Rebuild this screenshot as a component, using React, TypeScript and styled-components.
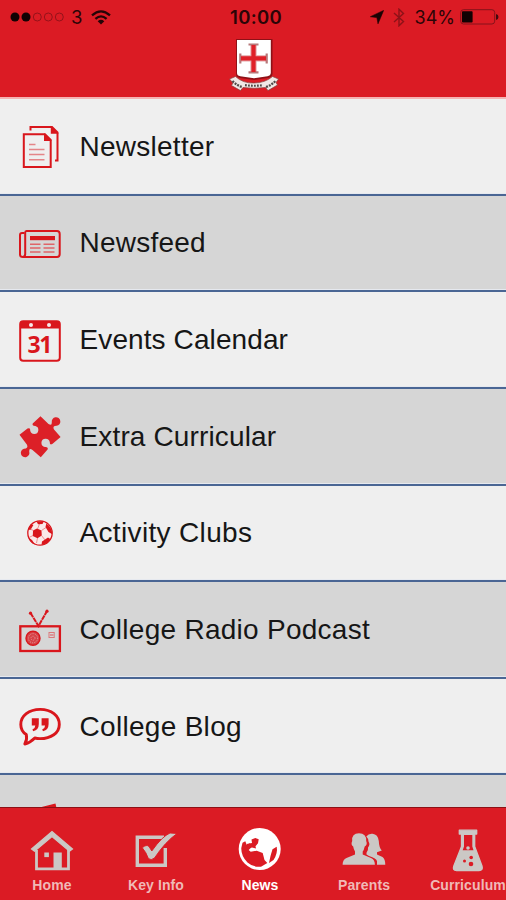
import React from "react";
import styled, { createGlobalStyle } from "styled-components";

const RED = "#db1b24";
const ICON_RED = "#d9161c";
const MUTED = "#cbc8c5";

const GlobalStyle = createGlobalStyle`
  * { box-sizing: border-box; }
  body { margin: 0; background: ${RED}; overflow: hidden; font-family: "Liberation Sans", Arial, sans-serif; }
  svg { display: block; flex: none; }
`;

const Screen = styled.div`
  width: 506px;
  height: 900px;
  display: flex;
  flex-direction: column;
  overflow: hidden;
`;

const Header = styled.header`
  height: 99px;
  flex: none;
  background: ${RED};
  border-bottom: 2px solid #f5b3b3;
`;

const StatusBar = styled.div`
  height: 34px;
  display: grid;
  grid-template-columns: 1fr 60px 1fr;
  align-items: center;
  padding: 0 7px 0 10px;
  color: #2b0507;
  font: 19px Inter, "Liberation Sans", sans-serif;
`;

const StatusGroup = styled.div<{ $end?: boolean }>`
  display: flex;
  align-items: center;
  justify-content: ${(p) => (p.$end ? "flex-end" : "flex-start")};
`;

const Carrier = styled.span`
  margin: 0 9px 0 6px;
  font-size: 18.5px;
`;

const Clock = styled.span`
  padding-left: 3px;
  text-align: center;
  font-weight: 600;
  font-size: 18.5px;
  letter-spacing: 0.3px;
  white-space: nowrap;
`;

const BluetoothSlot = styled.span`
  margin-left: 9px;
`;

const Percent = styled.span`
  margin: 0 5px 0 10px;
  font-size: 18px;
`;

const CrestSlot = styled.div`
  display: flex;
  justify-content: center;
  padding: 3px 0 0 2px;
`;

const List = styled.ul`
  flex: 1;
  min-height: 0;
  margin: 0;
  padding: 0;
  list-style: none;
  overflow: hidden;
`;

const Row = styled.li<{ $shaded: boolean }>`
  height: 96.65px;
  display: flex;
  align-items: center;
  padding-left: 18px;
  background: ${(p) => (p.$shaded ? "#d6d6d6" : "#efefef")};
  border-bottom: 2px solid #4a6694;
  box-shadow: inset 0 -1px 0 #e6e9ef;
`;

const RowCanvas = styled.svg`
  margin-top: 2px;
`;

const RowLabel = styled.span<{ $spacing: number }>`
  margin-left: 17.5px;
  padding-top: 1px;
  color: #161616;
  font-size: 28px;
  line-height: 32px;
  letter-spacing: ${(p) => p.$spacing}px;
  white-space: nowrap;
`;

const TabBar = styled.nav`
  height: 93px;
  flex: none;
  display: grid;
  grid-template-columns: repeat(5, 104px);
  background: ${RED};
  border-top: 1px solid #8d1015;
`;

const Tab = styled.div<{ $active?: boolean }>`
  display: flex;
  flex-direction: column;
  align-items: center;
  padding-top: 20px;
  color: ${(p) => (p.$active ? "#ffffff" : MUTED)};
`;

const TabLabel = styled.span<{ $active?: boolean }>`
  margin-top: 5px;
  color: ${(p) => (p.$active ? "#ffffff" : "#f0b9b7")};
  font-size: 14px;
  line-height: 16px;
  font-weight: 700;
  letter-spacing: 0.1px;
  white-space: nowrap;
`;

const SignalDots = () => (
  <svg width="55" height="12" viewBox="0 0 55 12">
    <circle cx="5" cy="6" r="4.5" fill="#120203" />
    <circle cx="16" cy="6" r="4.5" fill="#120203" />
    {[27.3, 38.3, 49.3].map((x) => (
      <circle key={x} cx={x} cy="6" r="4" fill="none" stroke="#94131a" strokeWidth="1" />
    ))}
  </svg>
);

const Wifi = () => (
  <svg width="20" height="15" viewBox="0 0 20 15" fill="none" stroke="#250406" strokeWidth="2.3">
    <path d="M1 5.3Q10-2.6 19 5.3M4.4 8.9Q10 3.8 15.6 8.9" />
    <path d="M10 14.5L6.7 11.3Q10 8.4 13.3 11.3Z" fill="#250406" stroke="none" />
  </svg>
);

const LocationArrow = () => (
  <svg width="14" height="14" viewBox="0 0 14 14">
    <path d="M13.6.4L8 13.8L6.9 7.6L.4 6.7Z" fill="#1b0304" stroke="#1b0304" strokeWidth=".6" />
  </svg>
);

const Bluetooth = () => (
  <svg width="12" height="19" viewBox="0 0 12 19" fill="none" stroke="#8d1218" strokeWidth="1.4">
    <path d="M1 5L10.5 13.5L6 17.8V1.2L10.5 5.5L1 14" />
  </svg>
);

const Battery = () => (
  <svg width="39" height="16" viewBox="0 0 39 16">
    <rect x=".7" y=".7" width="34" height="14.3" rx="2.8" fill="none" stroke="#86131a" />
    <rect x="2" y="2.3" width="10.6" height="11.2" rx=".8" fill="#110203" />
    <path d="M36 5Q38.5 5.5 38.5 8T36 11Z" fill="#430a0d" />
  </svg>
);

const Crest = () => (
  <svg width="52" height="56" viewBox="0 0 52 56">
    <path d="M8 2H44.5V37Q44 40 40 41L26 43L12 41Q8 40 8 37Z" fill="#8f1117" />
    <path d="M9 3H42.8V36Q42.5 38.8 39.5 39.2L26 41.3L12.3 39.2Q9 38.8 9 36Z" fill="#fff" />
    <path d="M25.5 8V35M13 21.4H38" stroke="#e3a6a8" strokeWidth="6.2" />
    <path d="M20.5 7.5H30.5M20.5 35.3H30.5M12.3 16.5V26.5M38.7 16.5V26.5" stroke="#b67779" strokeWidth="2.2" />
    <path d="M25.5 8V35M13 21.4H38" stroke="#df2028" strokeWidth="4.2" />
    <path d="M1.5 42L7.5 39.5Q15 46.5 26 46Q37 46 44.5 39.5L50.5 42L48 45.5L49.5 48L40 53.6L37.5 50.5Q26 52 15 50.5L12.5 53.6L3.5 48.5L5 46Z" fill="#f1e8e6" stroke="#85403f" strokeWidth=".7" />
    <g fill="none" stroke="#504b49" strokeWidth="2.2">
      <path d="M4.5 44Q9 48.5 14 50" strokeDasharray="2 1" />
      <path d="M17 48.2Q26 49.3 35 48.2" strokeDasharray="1.8 1.2" />
      <path d="M38 50Q44 48 47.5 43.8" strokeDasharray="2 1" />
    </g>
  </svg>
);

/* Row icons share one 44 unit canvas. */
const RowIcon = ({ children }: { children: React.ReactNode }) => (
  <RowCanvas width="44" height="44" viewBox="0 0 44 44" fill="none" stroke={ICON_RED} strokeWidth="2">
    {children}
  </RowCanvas>
);

const NewsletterIcon = () => (
  <RowIcon>
    <path d="M12.5 5.5V2H34L39.5 7.5V35.5H37" />
    <path d="M33.5 2.5V8H39Z" fill={ICON_RED} strokeWidth="1.4" />
    <path d="M5.8 9.3H27L32.7 15V42H5.8Z" />
    <path d="M26.7 9.8V15.3H32.2Z" fill={ICON_RED} strokeWidth="1.4" />
    <path d="M11 19.5H17.5M11 24.5H26.5M11 29.5H26.5M11 34.7H26.5" stroke="#e48588" strokeWidth="1.5" />
  </RowIcon>
);

const NewsfeedIcon = () => (
  <RowIcon>
    <path d="M8.5 9H39Q41.7 9 41.7 12V32Q41.7 35 39 35H5Q7.2 34.5 7.2 32V10.5Q7.2 9 8.5 9Z" />
    <path d="M6.5 11H4Q2 11 2 13V32.5Q2 35 5 35" />
    <rect x="12" y="14" width="25" height="4.2" fill={ICON_RED} stroke="none" />
    <path d="M12 22.3H22.5M25.5 22.3H36.5M12 26H22.5M25.5 26H36.5M12 30H22.5M25.5 30H36.5" stroke="#df6468" strokeWidth="1.5" />
  </RowIcon>
);

const CalendarDay = styled.text`
  font-family: "Noto Sans", "Open Sans", sans-serif;
  font-size: 23px;
  font-weight: 700;
  letter-spacing: -1.4px;
`;

const CalendarIcon = () => (
  <RowIcon>
    <rect x="2.2" y="2.2" width="39.6" height="39.6" rx="3" />
    <path d="M2 9.5V4.5Q2 2 5 2H39Q42 2 42 4.5V9.5Z" fill={ICON_RED} stroke="none" />
    <circle cx="13" cy="6" r="2" fill="#f7e9e9" stroke="none" />
    <circle cx="31" cy="6" r="2" fill="#f7e9e9" stroke="none" />
    <CalendarDay x="21.3" y="33.9" textAnchor="middle" fill={ICON_RED} stroke="none">31</CalendarDay>
  </RowIcon>
);

const PuzzleIcon = () => (
  <RowIcon>
    <path
      d="M1.5 19.8L9.5 13.6Q12.6 12.4 12.2 15.5A4.1 4.1 0 1 0 17.4 10.9Q13.8 11 14.7 8.6L22.5 1.2L30.5 9Q34 11.3 33.8 7.2A4.3 4.3 0 1 1 38.6 10.8Q34 11 36 14.5L42.6 22L34.3 29Q31.5 30.3 31.8 27.3A4.2 4.2 0 1 0 27 32Q30.6 31.8 29.6 34.5L22.8 42.3L14.5 35Q11 32.5 11.2 36.5A4.3 4.3 0 1 1 6 33.8Q10.6 33.4 9 29.7Z"
      fill="#dc2027" stroke="none"
    />
  </RowIcon>
);

const FootballIcon = () => (
  <RowIcon>
    <circle cx="22" cy="21" r="12.2" strokeWidth="1.3" fill="#fae9e9" />
    <path d="M15 18.5L19 16.6L23.5 18.5L23.8 23.5L19.5 26.3L14.8 24Z" fill={ICON_RED} stroke="none" />
    <path d="M18.5 9.5L26 9L24.5 12L20 12.3ZM28.3 11.5Q33.8 14.8 34.3 22.3L30.5 20L27.5 15ZM10 17.5L13 11.8L15.4 13L12.5 18ZM10.5 25.5L14 28L17 32.5Q12 31 10.5 25.5ZM24 29.5L30 25.5L32.3 27Q29.5 32.5 23.5 33Z" fill={ICON_RED} stroke="none" />
    <path d="M19.5 17L21.5 12M23.5 18.5L28 15.5M23.5 23.5L27 28M19.5 26L18.5 31M15 23.5L11 25.5M15.5 18.5L12 17" strokeWidth=".7" stroke="#e6686b" />
  </RowIcon>
);

const RadioIcon = () => (
  <RowIcon>
    <path d="M12.5 4L20.5 17L29 2" strokeWidth="2" strokeDasharray="5 .6" />
    <circle cx="12.5" cy="4.2" r="1.6" fill={ICON_RED} stroke="none" />
    <circle cx="29" cy="2.2" r="1.6" fill={ICON_RED} stroke="none" />
    <rect x="2.3" y="17.3" width="39.6" height="24.7" strokeWidth="2.3" />
    <circle cx="15" cy="29.2" r="7" fill="#d74247" strokeWidth="1.4" />
    <circle cx="15" cy="29.2" r="4.6" stroke="#e7a2a3" strokeWidth="1" strokeDasharray="1 1.3" />
    <circle cx="15" cy="29.2" r="2" stroke="#e7a2a3" strokeWidth=".8" strokeDasharray="1 1" />
    <rect x="31" y="23.5" width="5.2" height="5" stroke="#dc787b" strokeWidth="1" />
    <path d="M32 26H35.5" stroke="#dc787b" strokeWidth="1.4" />
  </RowIcon>
);

const BlogIcon = () => (
  <RowIcon>
    <path d="M8.3 29.5C4.2 26.9 2.8 23.5 2.8 19.4C2.8 10.8 11 4.4 22.2 4.4S41.3 10.8 41.3 19.4S33 33.6 22 33.6C19.8 33.6 18.4 33.4 16.8 33Q12.5 37.6 6.8 39Q9.4 34.5 8.3 29.5Z" strokeWidth="2.9" strokeLinejoin="round" />
    <path d="M13.8 13.3H20.8V19Q20.8 25 15.2 26.2L14.4 24.4Q17.4 23 17.3 20.5H13.8ZM23.6 13.3H30.6V19Q30.6 25 25 26.2L24.2 24.4Q27.2 23 27.1 20.5H23.6Z" fill={ICON_RED} stroke="none" />
  </RowIcon>
);

const PhotosIcon = () => (
  <RowIcon>
    <path d="M21 7L36.5 3L39.5 17L8 24L5.5 12L33 6.3" strokeWidth="2.6" />
  </RowIcon>
);

const HomeIcon = () => (
  <svg width="44" height="44" viewBox="0 0 44 44" fill="none" stroke="currentColor" strokeWidth="2.8">
    <path d="M6.5 22V40.8H38.5V22" />
    <path d="M1.5 21L22 3.5L42.5 21L39.5 23.2L22 8.5L4.5 23.2Z" fill="currentColor" strokeWidth="1.2" />
    <path d="M23.5 40V24.5H31.8V40Z" fill="currentColor" stroke="none" />
    <rect x="14.3" y="24.5" width="4.6" height="4.6" fill="currentColor" stroke="none" />
  </svg>
);

const CheckIcon = () => (
  <svg width="44" height="44" viewBox="0 0 44 44" fill="none">
    <path d="M30 9.3H3.3V37.3H31.3V20" stroke="currentColor" strokeWidth="3.4" />
    <path d="M8.3 19.8Q12.5 16 15 18.5L17.8 23Q28 8.5 36 5L43 5.5Q31 14 20.5 30Q17 33 14.4 30.5Q12 24 8.3 19.8Z" fill="currentColor" stroke={RED} strokeWidth=".9" />
  </svg>
);

const GlobeIcon = () => (
  <svg width="44" height="44" viewBox="0 0 44 44">
    <circle cx="21.7" cy="21" r="21" fill="currentColor" />
    <g fill={RED}>
      <path d="M4.5 14.7L7.3 13.3L8.7 16.7L12 15.3L14 18.7L10.7 22L12.7 23.7L18.7 22.7L24.7 25L26.5 32L29.3 35L23 38.7Q15 39.5 9.5 34.5Q3 28 3.3 20Z" />
      <path d="M8.7 16L14 15L13.5 11.5L17.3 10L20.7 11.3L20 15.2L17.5 18.3L18 20.5L14 19.5L10 20Z" />
      <path d="M34.5 21.3L38.7 18.7Q40 25 35.5 32L31 35L32.5 28Z" />
    </g>
  </svg>
);

const ParentsIcon = () => (
  <svg width="44" height="44" viewBox="0 0 44 44" fill="currentColor">
    <path d="M24.3 8.5Q26.5 5.3 30.5 5.7Q36 6.3 36.8 13Q37 19.5 39.8 22.6L35 24.3V26.5L40.5 29Q43.3 31 43.3 36.8H35V33.2Q34.5 30.5 27 28L24.5 26.5V24.8Q26.5 22 26 19.5Q28.5 16.5 26.5 13.5Q26.5 10.5 24.3 8.5Z" />
    <path d="M10.2 13Q9.5 5.3 17 5.3T24.2 13Q25.8 16.5 22.7 18.5Q22 22 20.7 23.5V26.5L29 30Q32.9 31.5 32.9 36.8H.6Q.6 31.5 4.5 30L13 26.5V23.5Q11.7 21.5 11.2 18.5Q8.5 16.5 10.2 13Z" />
  </svg>
);

const FlaskIcon = () => (
  <svg width="44" height="44" viewBox="0 0 44 44">
    <path d="M13.3 2.2H30.7V6H28.7V18.5L36 38Q37.3 42.5 33 42.5H10.5Q6.3 42.5 7.8 38L15.5 18.5V6H13.3Z" fill="currentColor" stroke="currentColor" strokeWidth="1.3" strokeLinejoin="round" />
    <path d="M18 7H26.3V18.5L27.5 22.3H16.7L18 18.5Z" fill={RED} />
    <circle cx="22" cy="20" r="1.8" fill="currentColor" />
    <circle cx="25.2" cy="29.5" r="1.8" fill={RED} />
    <circle cx="18.5" cy="33" r="1.5" fill={RED} />
    <circle cx="25" cy="36" r="2.3" fill={RED} />
  </svg>
);

const rows = [
  { label: "Newsletter", icon: <NewsletterIcon />, spacing: 0.26 },
  { label: "Newsfeed", icon: <NewsfeedIcon />, spacing: 0.23 },
  { label: "Events Calendar", icon: <CalendarIcon />, spacing: 0.1 },
  { label: "Extra Curricular", icon: <PuzzleIcon />, spacing: 0.14 },
  { label: "Activity Clubs", icon: <FootballIcon />, spacing: 0.34 },
  { label: "College Radio Podcast", icon: <RadioIcon />, spacing: 0.27 },
  { label: "College Blog", icon: <BlogIcon />, spacing: 0.3 },
  { label: "", icon: <PhotosIcon />, spacing: 0 },
];

const tabs = [
  { label: "Home", icon: <HomeIcon /> },
  { label: "Key Info", icon: <CheckIcon /> },
  { label: "News", icon: <GlobeIcon />, active: true },
  { label: "Parents", icon: <ParentsIcon /> },
  { label: "Curriculum", icon: <FlaskIcon /> },
];

export default function App() {
  return (
    <Screen>
      <GlobalStyle />
      <Header>
        <StatusBar>
          <StatusGroup>
            <SignalDots />
            <Carrier>3</Carrier>
            <Wifi />
          </StatusGroup>
          <Clock>10:00</Clock>
          <StatusGroup $end>
            <LocationArrow />
            <BluetoothSlot><Bluetooth /></BluetoothSlot>
            <Percent>34%</Percent>
            <Battery />
          </StatusGroup>
        </StatusBar>
        <CrestSlot><Crest /></CrestSlot>
      </Header>
      <List>
        {rows.map((row, i) => (
          <Row key={i} $shaded={i % 2 === 1}>
            {row.icon}
            <RowLabel $spacing={row.spacing}>{row.label}</RowLabel>
          </Row>
        ))}
      </List>
      <TabBar>
        {tabs.map((tab) => (
          <Tab key={tab.label} $active={tab.active}>
            {tab.icon}
            <TabLabel $active={tab.active}>{tab.label}</TabLabel>
          </Tab>
        ))}
      </TabBar>
    </Screen>
  );
}
